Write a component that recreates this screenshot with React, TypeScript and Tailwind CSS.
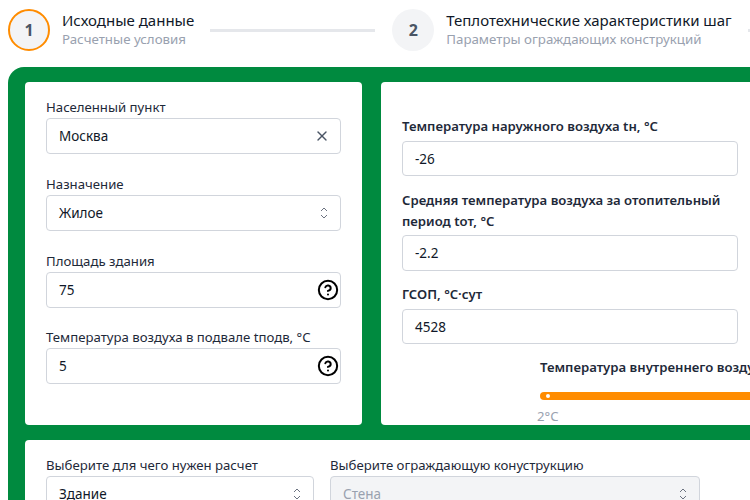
import { CircleHelp, X } from 'lucide-react'
import type { ReactNode } from 'react'

function UpDown() {
  return (
    <svg width="10" height="14" viewBox="0 0 10 14" fill="none" stroke="#6b7280" strokeWidth="1" className="mr-[3px] shrink-0">
      <path d="M2 5l3-3 3 3" />
      <path d="M2 9l3 3 3-3" />
    </svg>
  )
}

function Step({ n, title, sub, active }: { n: number; title: string; sub: string; active?: boolean }) {
  return (
    <div className="flex shrink-0 items-center">
      <div
        className={
          active
            ? 'flex h-[42px] w-[42px] items-center justify-center rounded-full border-2 border-[#ff8c00] bg-gray-100 text-base font-bold text-gray-600'
            : 'flex h-[42px] w-[42px] items-center justify-center rounded-full bg-gray-100 text-base font-bold text-gray-600'
        }
      >
        {n}
      </div>
      <div className="ml-3 flex flex-col pb-0.5">
        <span className="text-[15px] leading-5 text-gray-900">{title}</span>
        <span className="text-[13.3px] leading-[19px] text-gray-400">{sub}</span>
      </div>
    </div>
  )
}

function Box({ value, children, className }: { value: string; children?: ReactNode; className?: string }) {
  return (
    <div
      className={`flex items-center justify-between rounded border border-gray-300 bg-white pr-2 pl-3 text-[13.5px] text-gray-900 ${className ?? 'h-9'}`}
    >
      <span>{value}</span>
      {children}
    </div>
  )
}

function Field({ label, value, children, className }: { label: string; value: string; children?: ReactNode; className?: string }) {
  return (
    <div className={className ?? 'mb-5'}>
      <div className="text-[13.2px] leading-[21px] text-gray-800">{label}</div>
      <Box value={value}>{children}</Box>
    </div>
  )
}

function BoldField({
  label,
  value,
  className,
  labelClass,
  boxClass,
}: {
  label: string
  value: string
  className?: string
  labelClass: string
  boxClass: string
}) {
  return (
    <div className={className}>
      <div className={`text-[13.15px] leading-[21px] font-semibold text-gray-800 ${labelClass}`}>{label}</div>
      <Box value={value} className={boxClass} />
    </div>
  )
}

export default function App() {
  return (
    <div className="h-[500px] w-[750px] overflow-hidden bg-white font-['Noto_Sans',sans-serif]">
      <div className="flex w-[1200px] items-center pt-[9px] pl-2">
        <Step n={1} title="Исходные данные" sub="Расчетные условия" active />
        <div className="mr-[17px] ml-4 h-[3px] w-[165px] bg-gray-200" />
        <Step n={2} title="Теплотехнические характеристики шаг" sub="Параметры ограждающих конструкций" />
        <div className="ml-4 h-[3px] w-[165px] bg-gray-200" />
      </div>

      <div className="mt-4 ml-2 w-[1200px] rounded-tl-2xl bg-[#008a3f] pt-[15px] pl-[17px]">
        <div className="flex gap-[19px]">
          <div className="w-[337px] rounded bg-white px-[21px] pt-[15px] pb-[21px]">
            <Field label="Населенный пункт" value="Москва">
              <X size={16} className="mr-[2px] text-gray-600" />
            </Field>
            <Field label="Назначение" value="Жилое">
              <UpDown />
            </Field>
            <Field label="Площадь здания" value="75" className="mb-[19px]">
              <CircleHelp size={22} strokeWidth={2.2} className="-mr-[7px] text-black" />
            </Field>
            <Field label="Температура воздуха в подвале tподв, °C" value="5">
              <CircleHelp size={22} strokeWidth={2.2} className="-mr-[7px] text-black" />
            </Field>
          </div>

          <div className="h-[343px] w-[700px] rounded bg-white pt-[34px] pl-[21px]">
            <div className="w-[336px]">
              <BoldField
                label="Температура наружного воздуха tн, °C"
                value="-26"
                labelClass="mb-1"
                boxClass="h-[35px] pt-0.5"
              />
              <BoldField
                className="mt-[14px]"
                label="Средняя температура воздуха за отопительный период tот, °C"
                value="-2.2"
                labelClass="mb-[3px]"
                boxClass="h-9"
              />
              <BoldField
                className="mt-[13px]"
                label="ГСОП, °C·сут"
                value="4528"
                labelClass="mb-1"
                boxClass="h-[35px] pt-px"
              />
            </div>
            <div className="mt-[13px] ml-[138px]">
              <div className="text-[13.15px] leading-[21px] font-semibold text-gray-800">
                Температура внутреннего воздуха
              </div>
              <div className="mt-[14px] flex h-2 w-[400px] items-center rounded-full bg-[#ff8c00] pl-[6px]">
                <div className="h-1 w-1 rounded-full bg-white" />
              </div>
              <div className="mt-[6px] -ml-[3px] text-[13.2px] leading-5 text-gray-400">2°C</div>
            </div>
          </div>
        </div>

        <div className="mt-[15px] flex h-[100px] w-[900px] gap-4 rounded bg-white px-[21px] pt-[15px]">
          <div className="w-[268px]">
            <div className="text-[13.2px] leading-[21px] text-gray-800">Выберите для чего нужен расчет</div>
            <Box value="Здание">
              <UpDown />
            </Box>
          </div>
          <div className="w-[370px]">
            <div className="text-[13.2px] leading-[21px] text-gray-800">Выберите ограждающую конуструкцию</div>
            <Box value="Стена" className="h-9 border-gray-200 !bg-gray-100 !text-gray-400">
              <UpDown />
            </Box>
          </div>
        </div>
      </div>
    </div>
  )
}
